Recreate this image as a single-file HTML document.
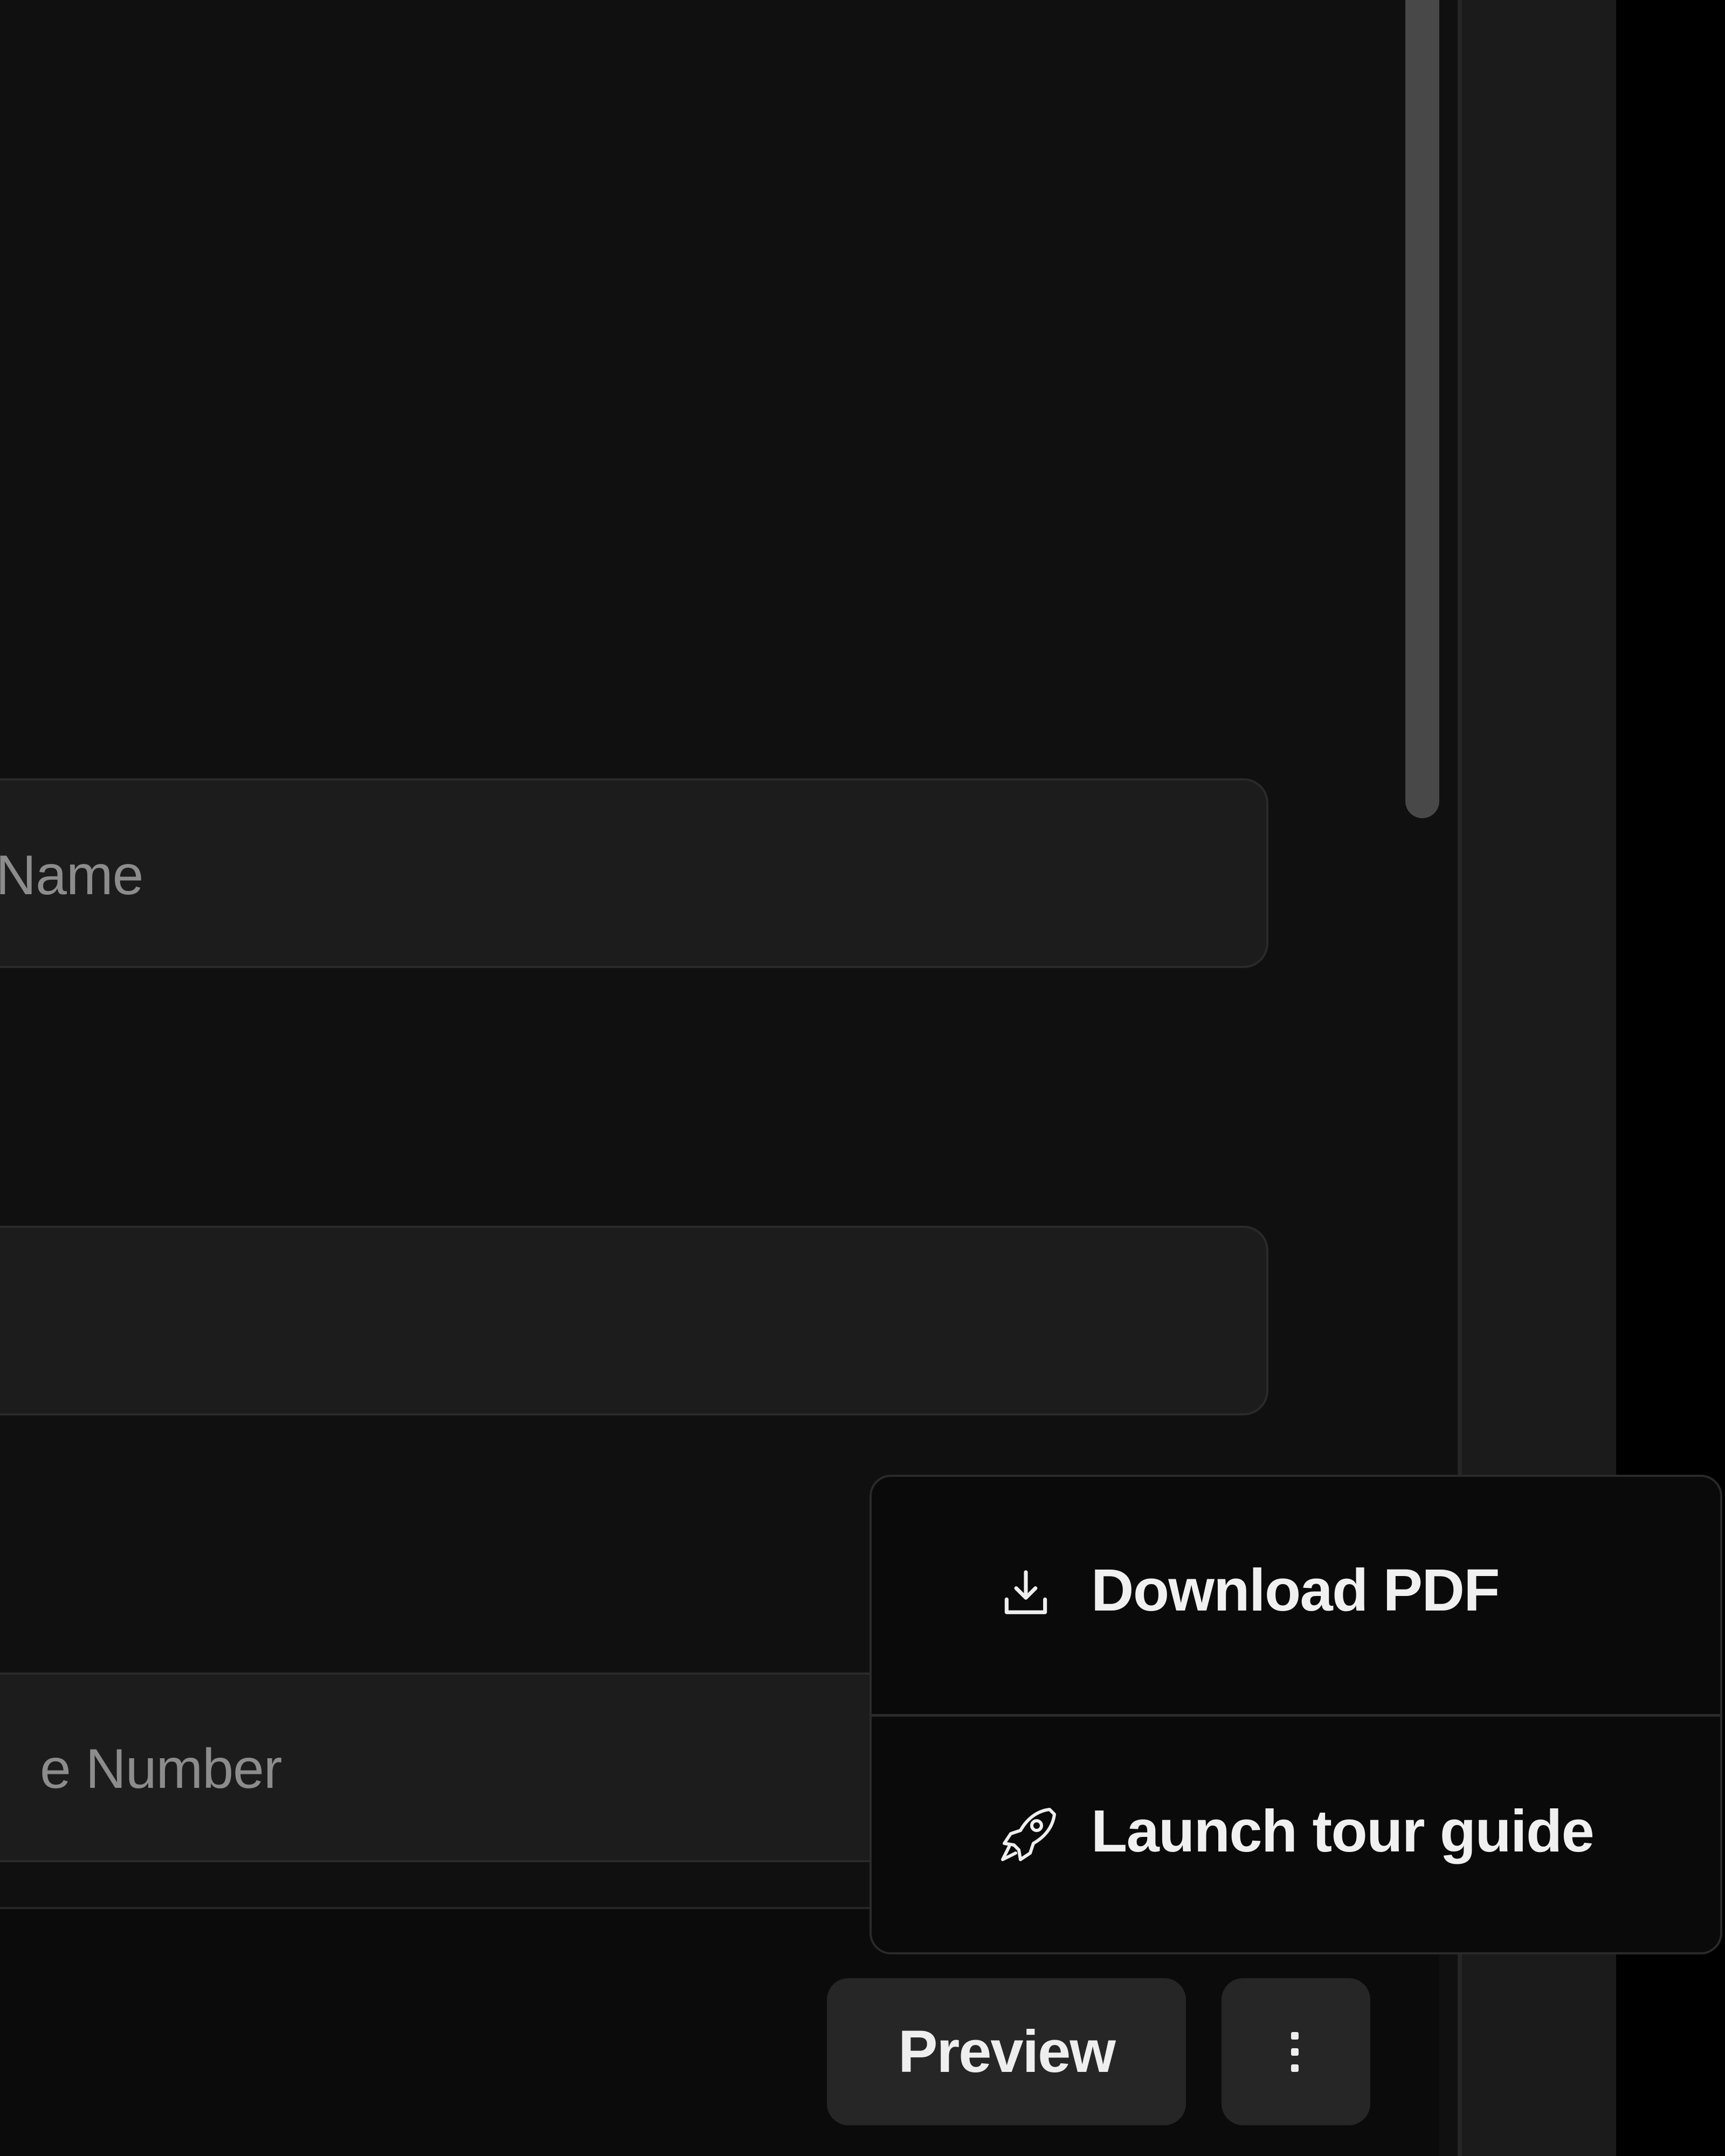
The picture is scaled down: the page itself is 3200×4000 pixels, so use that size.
<!DOCTYPE html>
<html><head><style>
html,body{margin:0;padding:0;}
body{width:3200px;height:4000px;position:relative;overflow:hidden;background:#101010;font-family:"Liberation Sans",sans-serif;}
.abs{position:absolute;box-sizing:border-box;}
.inp{left:-100px;width:2453px;height:352px;background:#1c1c1c;border:4px solid #2a2a2a;border-radius:46px;}
.ph{position:absolute;color:#8c8c8c;font-size:104px;letter-spacing:-1px;white-space:nowrap;}
.mi{position:absolute;left:2024px;color:#f0f0f0;font-size:110px;font-weight:bold;letter-spacing:-1.6px;white-space:nowrap;line-height:1;}
</style></head><body>
<div class="abs inp" style="top:1444px"></div>
<div class="ph" style="left:-8px;top:1564px;line-height:120px;">Name</div>
<div class="abs inp" style="top:2274px"></div>
<div class="abs inp" style="top:3103px"></div>
<div class="ph" style="left:74px;top:3222px;line-height:120px;">e Number</div>
<div class="abs" style="left:0;top:3538px;width:2670px;height:462px;background:#0b0b0b;border-top:4px solid #262626;"></div>
<div class="abs" style="left:2607px;top:-40px;width:63px;height:1558px;background:#484848;border-radius:32px;"></div>
<div class="abs" style="left:2670px;top:0;width:34px;height:4000px;background:#101010;"></div>
<div class="abs" style="left:2704px;top:0;width:8px;height:4000px;background:#262626;"></div>
<div class="abs" style="left:2712px;top:0;width:286px;height:4000px;background:#1b1b1b;"></div>
<div class="abs" style="left:2998px;top:0;width:202px;height:4000px;background:#000;"></div>
<div class="abs" style="left:1613px;top:2736px;width:1582px;height:890px;background:#0a0a0a;border:4px solid #2a2a2a;border-radius:40px;"></div>
<div class="abs" style="left:1617px;top:3180px;width:1574px;height:5px;background:#2a2a2a;"></div>
<svg class="abs" style="left:1858px;top:2908px" width="90" height="95" viewBox="0 0 30 32" fill="none" stroke="#eee" stroke-width="2.4" stroke-linecap="round" stroke-linejoin="round"><path d="M15 3v16M9 13l6 6 6-6M3 20v8h24v-8"/></svg>
<div class="mi" style="top:2896px">Download PDF</div>
<svg class="abs" style="left:1845px;top:3345px" width="120" height="120" viewBox="0 0 40 40" fill="none" stroke="#eee" stroke-width="2" stroke-linecap="round" stroke-linejoin="round"><path d="M34 4c-8 1-14 6-18 13l-6 2-4 6 6 1 3 3 1 6 6-4 2-6c7-4 12-10 13-18z"/><circle cx="26" cy="14" r="3"/><path d="M9 27l-4 8 8-4"/></svg>
<div class="mi" style="top:3343px">Launch tour guide</div>
<div class="abs" style="left:1534px;top:3670px;width:666px;height:273px;background:#262626;border-radius:40px;color:#eee;font-size:110px;font-weight:bold;letter-spacing:-2px;text-align:center;line-height:273px;">Preview</div>
<div class="abs" style="left:2266px;top:3670px;width:276px;height:273px;background:#262626;border-radius:40px;"></div>
<div class="abs" style="left:2395px;top:3770px;width:14px;height:14px;background:#eee;border-radius:3px;"></div>
<div class="abs" style="left:2395px;top:3800px;width:14px;height:14px;background:#eee;border-radius:3px;"></div>
<div class="abs" style="left:2395px;top:3830px;width:14px;height:14px;background:#eee;border-radius:3px;"></div>
</body></html>
